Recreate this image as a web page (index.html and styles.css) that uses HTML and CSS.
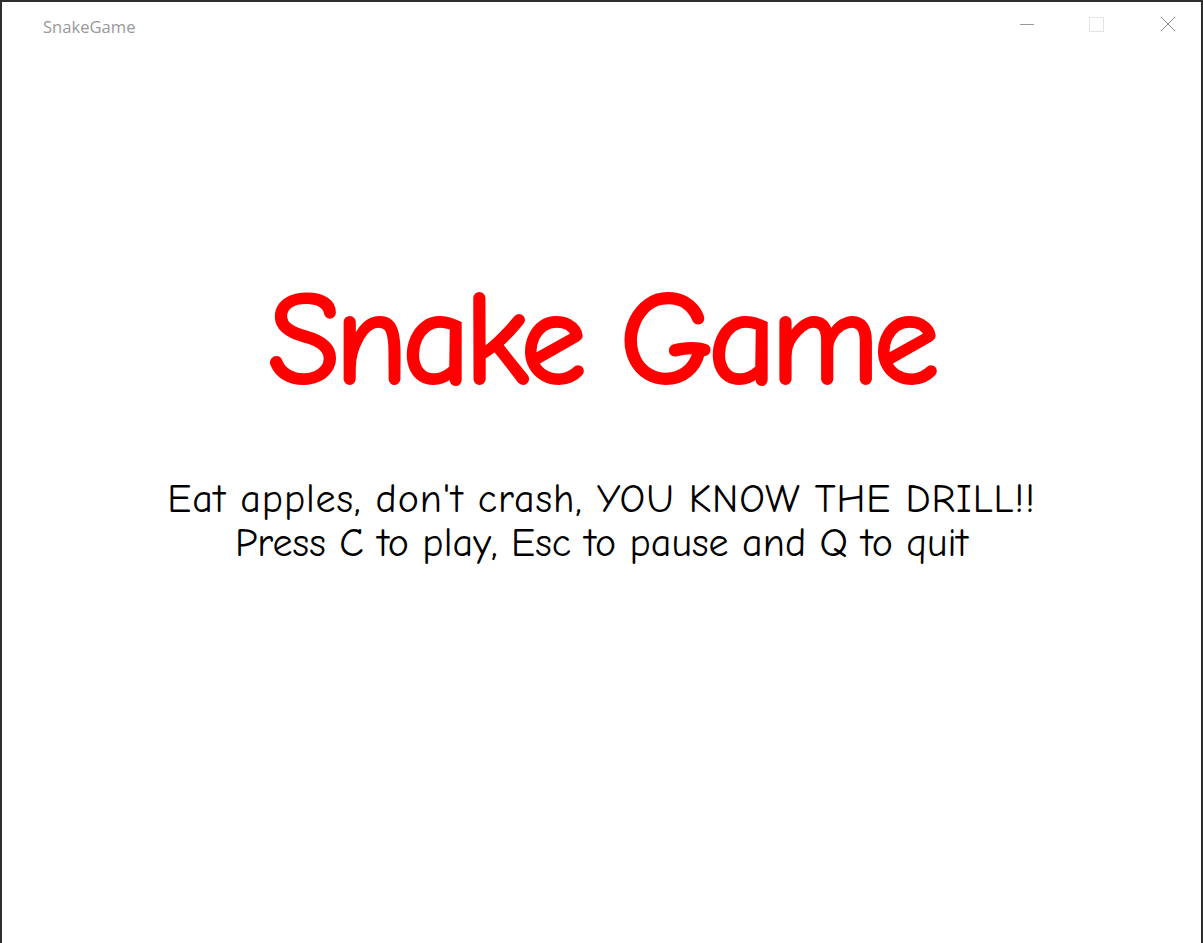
FILE: index.html
```html
<!DOCTYPE html>
<html lang="en">
<head>
<meta charset="utf-8">
<title>SnakeGame</title>
<link rel="stylesheet" href="styles.css">
</head>
<body>
<div class="window">
  <header class="titlebar">
    <span class="title">SnakeGame</span>
    <div class="controls">
      <span class="ctl">
        <svg width="16" height="16" viewBox="0 0 16 16"><line x1="1" y1="8.5" x2="15" y2="8.5" stroke="#999" stroke-width="1"/></svg>
      </span>
      <span class="ctl">
        <svg width="16" height="16" viewBox="0 0 16 16"><rect x="1.5" y="1.5" width="14" height="14" fill="none" stroke="#e3e3e3" stroke-width="1"/></svg>
      </span>
      <span class="ctl ctl-close">
        <svg width="16" height="16" viewBox="0 0 16 16"><path d="M1 1 L15 15 M15 1 L1 15" stroke="#8a8a8a" stroke-width="1" fill="none"/></svg>
      </span>
    </div>
  </header>
  <main class="screen">
    <h1 class="headline">Snake Game</h1>
    <p class="info">
      <span class="line line-one">Eat apples, don't crash, YOU KNOW THE DRILL!!</span>
      <span class="line line-two">Press C to play, Esc to pause and Q to quit</span>
    </p>
  </main>
</div>
</body>
</html>
```

FILE: styles.css
```css
html, body {
  margin: 0;
  padding: 0;
}
body {
  background: #2e2e2e;
  width: 1203px;
  height: 943px;
  overflow: hidden;
}
.window {
  margin: 2px 2px 0 2px;
  height: 941px;
  background: #ffffff;
  display: flex;
  flex-direction: column;
}
.titlebar {
  height: 48px;
  display: flex;
  align-items: center;
  justify-content: space-between;
  flex: none;
}
.title {
  font-family: "Segoe UI", "Open Sans", "Noto Sans", sans-serif;
  font-size: 16.6px;
  color: #999999;
  padding-left: 41px;
}
.controls {
  display: flex;
  align-items: center;
  gap: 53px;
  padding-right: 25px;
  margin-top: -5px;
}
.ctl {
  display: flex;
  width: 16px;
  height: 16px;
}
.ctl-close {
  margin-left: 3px;
}
.screen {
  flex: 1;
  display: flex;
  flex-direction: column;
  align-items: center;
  font-family: "Comic Sans MS", "Comic Neue", "Noto Sans", "DejaVu Sans", sans-serif;
}
.headline {
  margin: 225px 0 0 0;
  font-size: 130px;
  font-weight: 400;
  color: #ff0000;
  line-height: 1;
  letter-spacing: -4.6px;
  -webkit-text-stroke: 4px #ff0000;
}
.info {
  margin: 72px 0 0 0;
  font-size: 40px;
  line-height: 44px;
  text-align: center;
  color: #000000;
  display: flex;
  flex-direction: column;
  align-items: center;
}
.line {
  display: block;
  white-space: nowrap;
}
.line-one {
  letter-spacing: 0.85px;
}
.line-two {
  letter-spacing: 0.05px;
}
```
